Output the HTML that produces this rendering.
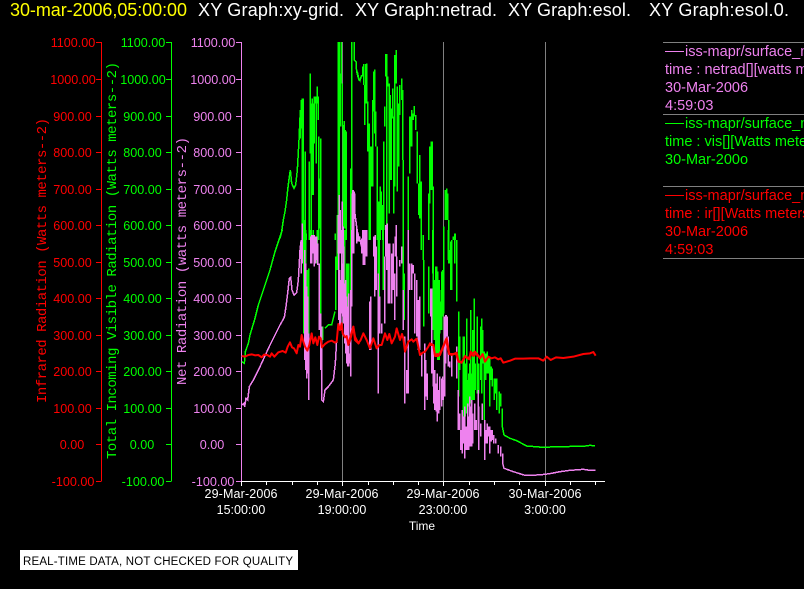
<!DOCTYPE html>
<html><head><meta charset="utf-8"><style>
html,body{margin:0;padding:0;background:#000;width:804px;height:589px;overflow:hidden}
svg{display:block}
text{font-family:"Liberation Sans",sans-serif}
.m{font-family:"Liberation Mono",monospace;font-size:14px}
.t{font-size:18px;fill:#fff}
.l{font-size:14.5px}
.tk{font-size:12.6px;text-anchor:middle}
.x{font-size:12.5px;fill:#fff;text-anchor:middle}
</style></head><body>
<svg width="804" height="589" viewBox="0 0 804 589" xmlns="http://www.w3.org/2000/svg">
<defs><clipPath id="c"><rect x="241" y="42" width="370" height="440"/></clipPath></defs>
<rect width="804" height="589" fill="#000"/>

<text x="10" y="16" class="t" style="fill:#ff0" textLength="177">30-mar-2006,05:00:00</text>
<text x="198" y="16" class="t" textLength="146">XY Graph:xy-grid.</text>
<text x="355" y="16" class="t" textLength="142">XY Graph:netrad.</text>
<text x="508" y="16" class="t" textLength="123">XY Graph:esol.</text>
<text x="649" y="16" class="t" textLength="140">XY Graph:esol.0.</text>

<!-- axes -->
<g shape-rendering="crispEdges" fill="none">
<path stroke="#f00" d="M101.5 42V481.5M96 42.5H101M96 79.5H101M96 116.5H101M96 152.5H101M96 189.5H101M96 225.5H101M96 262.5H101M96 298.5H101M96 335.5H101M96 371.5H101M96 408.5H101M96 444.5H101M96 481.5H101"/>
<path stroke="#0f0" d="M171.5 42V481.5M166 42.5H171M166 79.5H171M166 116.5H171M166 152.5H171M166 189.5H171M166 225.5H171M166 262.5H171M166 298.5H171M166 335.5H171M166 371.5H171M166 408.5H171M166 444.5H171M166 481.5H171"/>
<path stroke="#ee82ee" d="M241.5 42V481.5M236 42.5H241M236 79.5H241M236 116.5H241M236 152.5H241M236 189.5H241M236 225.5H241M236 262.5H241M236 298.5H241M236 335.5H241M236 371.5H241M236 408.5H241M236 444.5H241M236 481.5H241"/>
<path stroke="#808080" d="M342.5 42V481M443.5 42V481M545.5 42V481"/>
<path stroke="#fff" d="M241 481.5H605M266.5 481V485M292.5 481V485M317.5 481V485M342.5 481V486M368.5 481V485M393.5 481V485M418.5 481V485M443.5 481V486M469.5 481V485M494.5 481V485M519.5 481V485M545.5 481V486M570.5 481V485M595.5 481V485M241.5 481V486"/>
<path stroke="#808080" d="M663 42.5H804M663 114.5H804M663 186.5H804M663 258.5H804"/>
<path stroke="#ee82ee" d="M665 51.5H684"/>
<path stroke="#0f0" d="M665 123.5H684"/>
<path stroke="#f00" d="M665 195.5H684"/>
</g>

<!-- tick labels -->
<g class="tk" fill="#f00">
<text x="73" y="47" class="tk">1100.00</text><text x="73" y="84" class="tk">1000.00</text><text x="72.500" y="121" class="tk">900.00</text><text x="72.500" y="157" class="tk">800.00</text><text x="72.500" y="194" class="tk">700.00</text><text x="72.500" y="230" class="tk">600.00</text><text x="72.500" y="267" class="tk">500.00</text><text x="72.500" y="303" class="tk">400.00</text><text x="72.500" y="340" class="tk">300.00</text><text x="72.500" y="376" class="tk">200.00</text><text x="72.500" y="413" class="tk">100.00</text><text x="72" y="449" class="tk">0.00</text><text x="73" y="486" class="tk">-100.00</text>
</g>
<g class="tk" fill="#0f0">
<text x="143" y="47" class="tk">1100.00</text><text x="143" y="84" class="tk">1000.00</text><text x="142.500" y="121" class="tk">900.00</text><text x="142.500" y="157" class="tk">800.00</text><text x="142.500" y="194" class="tk">700.00</text><text x="142.500" y="230" class="tk">600.00</text><text x="142.500" y="267" class="tk">500.00</text><text x="142.500" y="303" class="tk">400.00</text><text x="142.500" y="340" class="tk">300.00</text><text x="142.500" y="376" class="tk">200.00</text><text x="142.500" y="413" class="tk">100.00</text><text x="142" y="449" class="tk">0.00</text><text x="143" y="486" class="tk">-100.00</text>
</g>
<g class="tk" fill="#ee82ee">
<text x="213" y="47" class="tk">1100.00</text><text x="213" y="84" class="tk">1000.00</text><text x="212.500" y="121" class="tk">900.00</text><text x="212.500" y="157" class="tk">800.00</text><text x="212.500" y="194" class="tk">700.00</text><text x="212.500" y="230" class="tk">600.00</text><text x="212.500" y="267" class="tk">500.00</text><text x="212.500" y="303" class="tk">400.00</text><text x="212.500" y="340" class="tk">300.00</text><text x="212.500" y="376" class="tk">200.00</text><text x="212.500" y="413" class="tk">100.00</text><text x="212" y="449" class="tk">0.00</text><text x="213" y="486" class="tk">-100.00</text>
</g>

<!-- axis titles -->
<text class="m" fill="#f00" transform="translate(46,403) rotate(-90)" textLength="285">Infrared Radiation (Watts meters--2)</text>
<text class="m" fill="#0f0" transform="translate(116,459) rotate(-90)" textLength="397">Total Incoming Visible Radiation (Watts meters--2)</text>
<text class="m" fill="#ee82ee" transform="translate(186,385) rotate(-90)" textLength="248">Net Radiation (watts meters--2)</text>

<!-- x labels -->
<g>
<text x="241" y="498" class="x" textLength="73">29-Mar-2006</text><text x="241" y="514" class="x">15:00:00</text>
<text x="342" y="498" class="x" textLength="73">29-Mar-2006</text><text x="342" y="514" class="x">19:00:00</text>
<text x="443" y="498" class="x" textLength="73">29-Mar-2006</text><text x="443" y="514" class="x">23:00:00</text>
<text x="545" y="498" class="x" textLength="73">30-Mar-2006</text><text x="545" y="514" class="x">3:00:00</text>
<text x="422" y="530" class="x" style="font-size:12px">Time</text>
</g>

<!-- traces -->
<g clip-path="url(#c)" fill="none" stroke-width="4.500" shape-rendering="crispEdges">
<!-- GREEN -->
<g stroke="#0f0">
<g transform="translate(230,230) scale(.33333)">
<path d="M35 395L43 400L46 365L55 340L60 315L75 265L85 225L100 180L120 120L135 65L150 20L157 0"/>
<path d="M221 0V310M224 0V115M227 0V240M230 120V240M233 120V235M236 115V340M241 0V30M250 0V15M262 0V100M272 0V330M279 290V330M285 295L295 285L305 285L315 245M318 80V240M322 0V120M326 0V90M336 0V60M345 0V160M351 100V240M354 100V240M357 100V240M362 200V240"/>
</g>
<g transform="translate(230,40) scale(.33333)">
<path d="M150 595L155 575L160 540L165 515L170 480L173 450L178 410L181 390L185 430L192 445L197 435L202 390L207 300L211 210"/>
<path d="M211 210V295M214 180V265M217 175V600M220 175V600M223 540V600M226 335V600M229 580V600M238 365V600M241 100V340M244 190V600M247 175V465M250 190V465M253 170V310M256 170V190M259 170V370M262 140V190M265 170V240M267 290V600M270 415V565M273 295V600M316 580V600M322 525V600M325 6V600M328 6V600M331 100V260M334 6V130M337 130V260M340 255V560M343 243V565M346 270V565M349 275V600M363 385V600M366 6V600M373 6V60L378 65L380 95L384 110L388 122"/>
</g>
<g transform="translate(350,40) scale(.33333)">
<path d="M22 95L26 115L30 122L35 105M38 80V110M41 72V135M44 135V255M48 72V190M50 70V190M54 185V335M58 250V600M61 320V600M64 320V440M68 180V440M72 95V215M75 88V280M78 215V320M82 320V600M87 485V600M91 440V600M94 455V570M98 495V600M101 305V570M105 200V260M108 42V110M111 42V600M114 110V140M118 130V520M121 165V420M124 205V420M128 145V235M132 230V520M135 45V440M139 30V130M142 140V455M147 190V380M150 135V225M155 115V180M158 150V360M160 360V600M175 410V600M179 230V400M182 230V320M185 210V320M190 220V240M193 198V230M198 225V270M202 275V430M206 430V525M210 345V535M214 425V600M220 585V600M236 460V600M240 320V490M244 305V450M247 305V450M250 440V600M282 560V600M286 450V540M290 445V540M293 460V540M297 540V600M310 590V600M316 580V600"/>
</g>
<g transform="translate(350,230) scale(.33333)">
<path d="M2 0V300M60 0V18M85 0V240M88 0V240M100 0V180M160 0V290M163 130V270M175 0V260M214 0V60M220 30V90M222 90V290M236 110V250M248 0V130M253 150V330M258 210V370M260 110V370M263 210V370M268 150V390M275 125V290M281 0V250M296 0V100M305 30V180M315 10V60M320 30V215"/>
</g>
<g transform="translate(430,230) scale(.33333)">
<path d="M10 0V300M13 150V300M17 110V370M20 150V370M23 125V390M27 230V370M30 180V310M33 215V300M36 185V300M39 120V260M42 0V230M55 0V90M58 60V100M63 35V180M66 55V85M75 10V100M80 30V215M87 245V500M90 320V420M100 320V560M103 320V540M106 400V560M110 265V550M113 450V520M116 430V530M119 400V520M122 240V520M125 430V510M128 300V510M133 205V510M136 400V480M142 260V490M147 400V490M152 290V450M155 265V490M158 300V400M163 365V570M167 370V450M172 365V430M176 380V430M180 385V530M184 410V450M187 415V470M193 445V510M197 445V490M200 445V540M208 485V550M212 490V530M217 535V590L222 615L240 625L260 632L290 648L340 652L380 650L460 649L480 646L495 648"/>
</g>
</g>
<!-- VIOLET -->
<g stroke="#ee82ee">
<g transform="translate(230,230) scale(.33333)">
<path d="M35 525L42 520L44 530L48 505L53 510L58 470L70 450L90 410L120 345L150 285L163 262L168 230L173 190L178 145L182 142L186 180L192 195L200 188L205 150L210 60L213 35"/>
<path d="M214 30V130M217 30V100M224 60V390M227 100V420M230 170V445M233 200V430M236 310V510M242 20V100M246 15V100M249 40V70M253 15V110M257 20V100M260 20V90M264 40V105M268 100V300M272 250V420M275 290V510L280 515L285 480L295 470L310 450L316 400L320 330M326 0V270M330 120V300M333 150V300M336 0V250M339 100V260M342 50V280M345 160V340M348 150V370M351 200V400M354 230V410M357 190V410M360 370V400M366 0V90M372 0V30M380 0V40"/>
</g>
<g transform="translate(230,40) scale(.33333)">
<path d="M217 550V640M245 590V640M248 585V640M252 590V640M256 590V640M259 590V640M325 525V640M328 465V640M331 510V640M337 485V640M340 560V640M367 460V640M370 450V515M373 455V515L378 545L381 570L385 590L388 600"/>
</g>
<g transform="translate(350,40) scale(.33333)">
<path d="M8 450V640M11 460V640M14 460V515L18 545L22 575L26 590L30 600L36 625M36 595V640M39 570V640M44 590V650M48 570V650M51 580V650M72 590V650M76 585V650M108 555V650M112 550V650M136 590V650M139 555V650"/>
</g>
<g transform="translate(350,230) scale(.33333)">
<path d="M2 180V440M5 0V230M25 10V35M30 20V35M40 0V105M45 0V105M50 0V30M60 215V360M63 200V360M75 20V200M79 50V180M85 130V490M90 200V310M95 280V310M105 80V280M110 0V120M115 40V220M120 40V220M125 70V220M130 40V180M135 130V270M140 80V200M150 90V110M155 50V100M160 180V300M165 320V520M170 420V490M175 0V490M180 100V180M185 100V180M190 105V130M195 130V310M200 150V320M205 210V360M210 200V360M215 370V440M225 340V540M228 390V500M232 430V510M245 175V430M250 350V470M255 420V540M259 460V545M262 480V575M266 500V540M270 440V540M275 450V500M280 470V510M285 260V500M289 255V310M295 400V410M300 395V410M305 370V400M325 480V600M330 550V600M340 560V600M345 550V600M360 500V600M365 550V600M385 480V600"/>
</g>
<g transform="translate(430,230) scale(.33333)">
<path d="M3 175V260M12 420V520M16 480V530M22 430V575M26 480V550M30 445V530M35 445V530M38 440V475M42 450V475M48 255V400M52 260V320M55 320V400M60 400V412M65 395V440M80 350V445M85 550V600M88 550V600M92 600V660M97 540V670M101 580V640M105 530V685M109 590V660M113 520V660M117 560V660M121 530V650M125 510V650M129 550V640M135 520V600M139 570V600M147 530V660M152 580V620M157 520V570M165 570V690M169 600V640M172 580V640M176 590V620M180 590V670M184 600V635M187 600V630M191 615V640M197 625V640M205 645V670M213 650V680M218 670V700L222 715L250 725L285 736L320 735L345 733L365 730L390 725L420 721L460 718L480 721L497 721"/>
</g>
</g>
<!-- RED -->
<g stroke="#f00" stroke-width="6" shape-rendering="auto" stroke-linejoin="round">
<g transform="translate(230,230) scale(.33333)">
<path d="M35 378L45 380L55 375L65 373L75 376L85 375L95 382L102 374L112 375L120 380L125 370L133 380L145 367L158 363L167 368L173 350L180 337L186 352L192 355L200 370L205 345L210 350L215 315L220 335L225 350L232 362L238 345L245 310L250 340L256 322L262 345L267 320L272 325L276 352L285 342L295 335L305 332L315 338L320 335L325 282L330 300L335 280L338 310L345 322L350 318L355 345L362 325L370 290L375 330L380 335L388 342"/>
</g>
<g transform="translate(350,230) scale(.33333)">
<path d="M-4 340L4 310L10 290L15 320L25 340L32 330L40 310L50 330L60 355L70 325L80 355L88 345L95 345L105 310L112 330L118 312L125 340L135 320L140 295L150 330L156 312L160 325L165 365L175 335L185 328L190 335L200 326L210 375L218 368L225 365L235 350L240 340L250 345L255 375L262 372L270 375L280 350L290 325L298 372L310 372L320 368L325 392L335 398L345 378L355 385L365 372L375 365L383 378L390 380"/>
</g>
<g transform="translate(430,230) scale(.33333)">
<path d="M0 345L10 345L15 378L25 378L35 360L48 328L57 372L65 375L78 370L85 395L95 398L105 380L118 388L122 365L130 378L140 370L150 385L158 372L165 395L175 380L185 385L195 382L205 388L212 385L220 398L230 395L240 392L255 386L280 386L300 385L325 385L340 392L350 380L362 390L378 382L400 384L430 380L460 372L480 370L490 366L497 377"/>
</g>
</g>
</g>

<!-- legend -->
<g class="l" fill="#ee82ee">
<text x="685" y="56" class="l">iss-mapr/surface_mapr</text>
<text x="665" y="74" class="l">time : netrad[][watts meters--2]</text>
<text x="665" y="92" class="l">30-Mar-2006</text>
<text x="665" y="110" class="l">4:59:03</text>
</g>
<g class="l" fill="#0f0">
<text x="685" y="128" class="l">iss-mapr/surface_mapr</text>
<text x="665" y="146" class="l">time : vis[][Watts meters--2]</text>
<text x="665" y="164" class="l">30-Mar-200o</text>
</g>
<g class="l" fill="#f00">
<text x="685" y="200" class="l">iss-mapr/surface_mapr</text>
<text x="665" y="218" class="l">time : ir[][Watts meters--2]</text>
<text x="665" y="236" class="l">30-Mar-2006</text>
<text x="665" y="254" class="l">4:59:03</text>
</g>

<!-- note -->
<rect x="20" y="550" width="278" height="20" fill="#fff" shape-rendering="crispEdges"/>
<text x="23" y="565" fill="#000" style="font-size:11.500px" textLength="270">REAL-TIME DATA, NOT CHECKED FOR QUALITY</text>
</svg>
</body></html>
